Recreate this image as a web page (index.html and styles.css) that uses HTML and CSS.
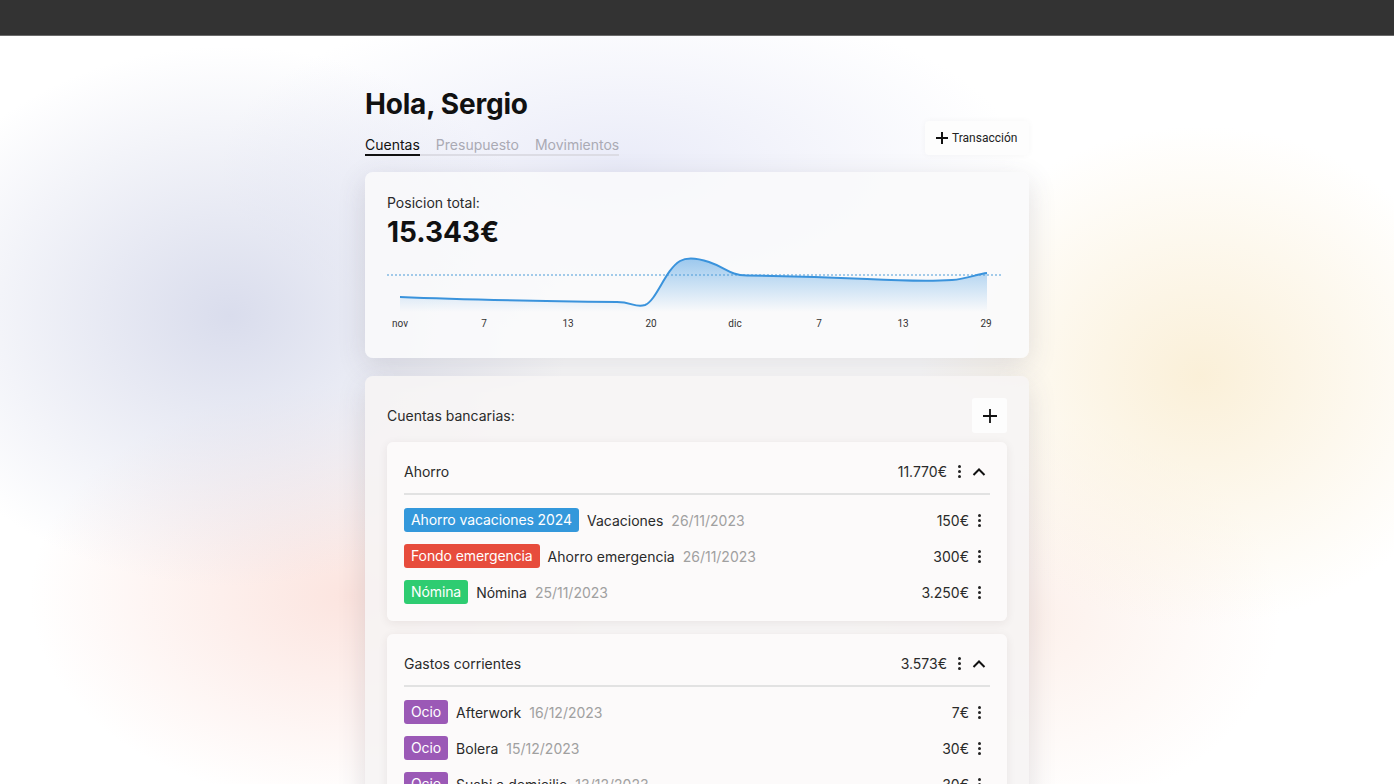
FILE: index.html
```html
<!DOCTYPE html>
<html lang="es">
<head>
<meta charset="utf-8">
<title>Finanzas</title>
<link rel="stylesheet" href="styles.css">
</head>
<body>
<div class="topbar"></div>
<div class="page">
  <main class="container">
    <header class="head">
      <div class="head-left">
        <h1 class="title">Hola, Sergio</h1>
        <nav class="tabs">
          <a class="tab active">Cuentas</a>
          <a class="tab">Presupuesto</a>
          <a class="tab">Movimientos</a>
        </nav>
      </div>
      <button class="btn-tx">
        <svg class="ico-plus-sm" viewBox="0 0 14 14" width="14" height="14"><path d="M7 1v12M1 7h12" stroke="#111" stroke-width="2" fill="none"/></svg>
        <span>Transacción</span>
      </button>
    </header>

    <section class="card total">
      <div class="label">Posicion total:</div>
      <div class="big">15.343€</div>
      <svg class="chart" viewBox="0 0 619 85" width="619" height="85">
        <defs>
          <linearGradient id="fillg" x1="0" y1="8" x2="0" y2="62" gradientUnits="userSpaceOnUse">
            <stop offset="0" stop-color="#3d96e0" stop-opacity="0.5"/>
            <stop offset="1" stop-color="#3d96e0" stop-opacity="0"/>
          </linearGradient>
        </defs>
        <path d="M13,47 C60,49 150,51 230,52 C245,52 248,58 258,55 C270,50 278,20 293,11 C300,7 310,8 322,12 C340,18 342,25 360,25.5 C420,26 440,27 480,29 C520,31 550,31 565,30 C580,29 590,24 600,23 L600,64 L13,64 Z" fill="url(#fillg)"/>
        <line x1="0" y1="25" x2="615" y2="25" stroke="#4a9bd8" stroke-width="1" stroke-dasharray="2 2"/>
        <path d="M13,47 C60,49 150,51 230,52 C245,52 248,58 258,55 C270,50 278,20 293,11 C300,7 310,8 322,12 C340,18 342,25 360,25.5 C420,26 440,27 480,29 C520,31 550,31 565,30 C580,29 590,24 600,23" fill="none" stroke="#3a93dc" stroke-width="2"/>
        <g class="axis" text-anchor="middle">
          <text x="13" y="77">nov</text>
          <text x="97" y="77">7</text>
          <text x="181" y="77">13</text>
          <text x="264" y="77">20</text>
          <text x="348" y="77">dic</text>
          <text x="432" y="77">7</text>
          <text x="516" y="77">13</text>
          <text x="599" y="77">29</text>
        </g>
      </svg>
    </section>

    <section class="card accounts">
      <div class="acc-head">
        <div class="label">Cuentas bancarias:</div>
        <button class="btn-add">
          <svg viewBox="0 0 16 16" width="16" height="16"><path d="M8 1v14M1 8h14" stroke="#111" stroke-width="1.8" fill="none"/></svg>
        </button>
      </div>

      <div class="account">
        <div class="account-head">
          <span class="acc-name">Ahorro</span>
          <div class="acc-right">
            <span class="acc-amount">11.770€</span>
            <span class="kebab"><i></i><i></i><i></i></span>
            <svg class="chev" viewBox="0 0 20 20" width="20" height="20"><path d="M4.5 13l5.5-5.5 5.5 5.5" stroke="#111" stroke-width="2" fill="none"/></svg>
          </div>
        </div>
        <ul class="rows">
          <li class="row"><span class="tag blue">Ahorro vacaciones 2024</span><span class="name">Vacaciones</span><span class="date">26/11/2023</span><span class="amt">150€</span><span class="kebab"><i></i><i></i><i></i></span></li>
          <li class="row"><span class="tag red">Fondo emergencia</span><span class="name">Ahorro emergencia</span><span class="date">26/11/2023</span><span class="amt">300€</span><span class="kebab"><i></i><i></i><i></i></span></li>
          <li class="row"><span class="tag green">Nómina</span><span class="name">Nómina</span><span class="date">25/11/2023</span><span class="amt">3.250€</span><span class="kebab"><i></i><i></i><i></i></span></li>
        </ul>
      </div>

      <div class="account">
        <div class="account-head">
          <span class="acc-name">Gastos corrientes</span>
          <div class="acc-right">
            <span class="acc-amount">3.573€</span>
            <span class="kebab"><i></i><i></i><i></i></span>
            <svg class="chev" viewBox="0 0 20 20" width="20" height="20"><path d="M4.5 13l5.5-5.5 5.5 5.5" stroke="#111" stroke-width="2" fill="none"/></svg>
          </div>
        </div>
        <ul class="rows">
          <li class="row"><span class="tag purple">Ocio</span><span class="name">Afterwork</span><span class="date">16/12/2023</span><span class="amt">7€</span><span class="kebab"><i></i><i></i><i></i></span></li>
          <li class="row"><span class="tag purple">Ocio</span><span class="name">Bolera</span><span class="date">15/12/2023</span><span class="amt">30€</span><span class="kebab"><i></i><i></i><i></i></span></li>
          <li class="row"><span class="tag purple">Ocio</span><span class="name">Sushi a domicilio</span><span class="date">13/12/2023</span><span class="amt">30€</span><span class="kebab"><i></i><i></i><i></i></span></li>
        </ul>
      </div>
    </section>
  </main>
</div>
</body>
</html>
```

FILE: styles.css
```css
* { box-sizing: border-box; }
html, body { margin: 0; padding: 0; }
body {
  font-family: Inter, "Noto Sans", "Liberation Sans", sans-serif;
  color: #1a1a1a;
  background: #fff;
  overflow: hidden;
}
.topbar {
  height: 36px;
  background: #333333;
  border-bottom: 1px solid #6a6a6a;
}
.page {
  min-height: 760px;
  background:
    radial-gradient(ellipse 340px 270px at 230px 280px, rgba(208,212,232,0.8), rgba(208,212,232,0) 100%),
    radial-gradient(ellipse 320px 210px at 350px 560px, rgba(250,214,206,0.65), rgba(250,214,206,0) 100%),
    radial-gradient(ellipse 280px 250px at 1200px 340px, rgba(250,238,212,0.9), rgba(250,238,212,0) 100%),
    radial-gradient(ellipse 260px 200px at 1020px 580px, rgba(250,228,218,0.55), rgba(250,228,218,0) 100%),
    radial-gradient(ellipse 400px 170px at 620px 130px, rgba(230,232,247,0.85), rgba(230,232,247,0) 100%),
    #ffffff;
}
.container {
  width: 664px;
  margin: 0 auto;
  padding-top: 51px;
}
.head {
  display: flex;
  justify-content: space-between;
  align-items: flex-end;
}
.title {
  margin: 0;
  font-size: 28px;
  line-height: 34px;
  font-weight: 700;
  color: #111;
  letter-spacing: -0.2px;
}
.tabs {
  display: inline-flex;
  gap: 16px;
  margin-top: 15px;
  border-bottom: 2px solid #dcdce4;
}
.tab {
  font-size: 14px;
  line-height: 17px;
  color: #aaaab4;
  padding-bottom: 1px;
  margin-bottom: -2px;
  border-bottom: 2px solid transparent;
}
.tab.active {
  color: #111;
  border-bottom-color: #111;
}
.btn-tx {
  display: flex;
  align-items: center;
  gap: 3px;
  height: 34px;
  width: 104px;
  padding: 0 10px;
  margin-bottom: 1px;
  border: none;
  border-radius: 4px;
  background: #fdfdfd;
  box-shadow: 0 0 6px rgba(0,0,0,0.04);
  font-family: Roboto, "Liberation Sans", sans-serif;
  font-size: 12px;
  color: #222;
}
.card {
  background: rgba(249,249,250,0.88);
  border-radius: 8px;
  box-shadow: 0 8px 28px rgba(70,60,80,0.16);
}
.total {
  margin-top: 16px;
  padding: 22px;
  height: 186px;
}
.label {
  font-size: 14px;
  line-height: 18px;
  color: #2a2a2a;
}
.big {
  margin-top: 3px;
  font-size: 28px;
  line-height: 34px;
  font-weight: 700;
  color: #111;
}
.chart {
  display: block;
  margin-top: 1px;
}
.axis text {
  font-family: Roboto, "Liberation Sans", sans-serif;
  font-size: 10px;
  fill: #333;
}
.accounts {
  margin-top: 18px;
  padding: 22px 22px 20px;
  background: rgba(246,244,244,0.88);
}
.acc-head {
  display: flex;
  justify-content: space-between;
  align-items: center;
  height: 35px;
}
.btn-add {
  width: 35px;
  height: 35px;
  border: none;
  border-radius: 3px;
  background: #fdfdfd;
  display: flex;
  align-items: center;
  justify-content: center;
  padding: 0;
}
.account {
  margin-top: 9px;
  background: rgba(252,250,250,0.95);
  border-radius: 6px;
  box-shadow: 0 2px 10px rgba(60,40,40,0.08);
  padding: 0 17px 11px;
}
.account + .account { margin-top: 13px; }
.account-head {
  height: 53px;
  display: flex;
  justify-content: space-between;
  align-items: center;
  padding-top: 8px;
  border-bottom: 2px solid #e2e2e2;
  font-size: 14px;
  color: #2a2a2a;
}
.acc-right {
  display: flex;
  align-items: center;
}
.acc-amount { margin-right: 2px; }
.kebab {
  width: 20px;
  height: 20px;
  display: inline-flex;
  flex-direction: column;
  align-items: center;
  justify-content: center;
  gap: 2px;
}
.kebab i {
  display: block;
  width: 3px;
  height: 3px;
  border-radius: 50%;
  background: #222;
}
.chev { display: block; margin-right: 1px; }
.rows {
  list-style: none;
  margin: 0;
  padding: 7px 0 0;
}
.row {
  height: 36px;
  display: flex;
  align-items: center;
  font-size: 14px;
  color: #2a2a2a;
}
.row .kebab { margin-right: 1px; }
.tag {
  height: 24px;
  line-height: 24px;
  padding: 0 7px;
  border-radius: 3px;
  color: #fff;
  margin-right: 8px;
  letter-spacing: -0.1px;
}
.tag.blue { background: #3498db; }
.tag.red { background: #e74c3c; }
.tag.green { background: #2ecc71; }
.tag.purple { background: #9b59b6; }
.name { margin-right: 8px; }
.date { color: #a0a0a0; }
.amt { margin-left: auto; }
```
